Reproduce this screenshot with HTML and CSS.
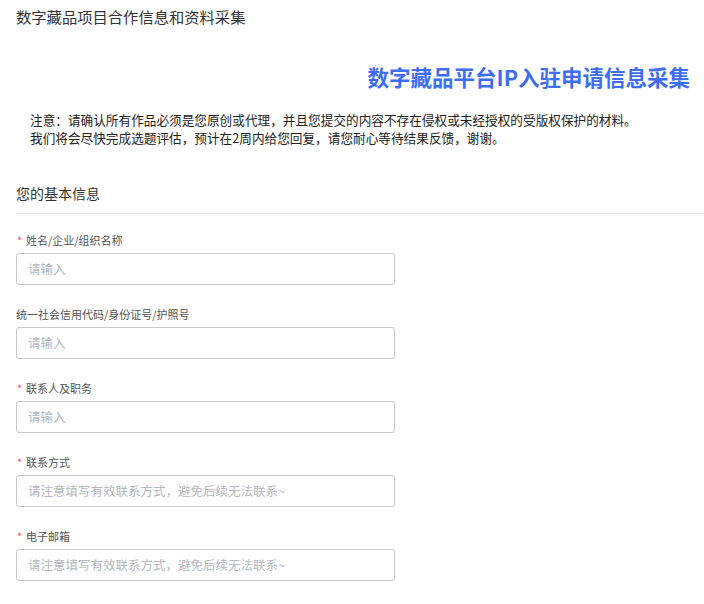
FILE: index.html
```html
<!DOCTYPE html>
<html lang="zh">
<head>
<meta charset="utf-8">
<title>数字藏品项目合作信息和资料采集</title>
<link rel="stylesheet" href="styles.css">
</head>
<body>
<div class="page">
  <div class="top-title">数字藏品项目合作信息和资料采集</div>
  <h1 class="main-title">数字藏品平台IP入驻申请信息采集</h1>
  <div class="notice">
    <p>注意：请确认所有作品必须是您原创或代理，并且您提交的内容不存在侵权或未经授权的受版权保护的材料。</p>
    <p>我们将会尽快完成选题评估，预计在2周内给您回复，请您耐心等待结果反馈，谢谢。</p>
  </div>
  <h2 class="section-title">您的基本信息</h2>
  <form class="form">
    <div class="field">
      <label class="label"><span class="req">*</span>姓名/企业/组织名称</label>
      <input class="input" type="text" placeholder="请输入">
    </div>
    <div class="field">
      <label class="label">统一社会信用代码/身份证号/护照号</label>
      <input class="input" type="text" placeholder="请输入">
    </div>
    <div class="field">
      <label class="label"><span class="req">*</span>联系人及职务</label>
      <input class="input" type="text" placeholder="请输入">
    </div>
    <div class="field">
      <label class="label"><span class="req">*</span>联系方式</label>
      <input class="input" type="text" placeholder="请注意填写有效联系方式，避免后续无法联系~">
    </div>
    <div class="field">
      <label class="label"><span class="req">*</span>电子邮箱</label>
      <input class="input" type="text" placeholder="请注意填写有效联系方式，避免后续无法联系~">
    </div>
  </form>
</div>
</body>
</html>
```
FILE: styles.css
```css
* { box-sizing: border-box; }
html, body {
  margin: 0;
  padding: 0;
  background: #fff;
}
body {
  font-family: "Noto Sans CJK SC", "Noto Sans", "Liberation Sans", sans-serif;
  color: #333;
}
.page {
  padding-left: 16px;
}
.top-title {
  margin-top: 6px;
  font-size: 15.3px;
  line-height: 20px;
  color: #333;
}
.main-title {
  margin: 36px 0 0 0;
  padding-right: 14px;
  text-align: right;
  font-size: 21.5px;
  line-height: 30px;
  font-weight: 700;
  color: #3d6df2;
}
.notice {
  margin-top: 19px;
  padding-left: 14px;
  font-size: 12.65px;
  line-height: 18.4px;
  color: #222;
}
.notice p { margin: 0; }
.section-title {
  margin: 35px 0 0 0;
  padding-bottom: 10px;
  border-bottom: 1px solid #e6e6e6;
  font-size: 14px;
  line-height: 20px;
  font-weight: 400;
  color: #333;
}
.form {
  margin: 0;
  padding-top: 18px;
}
.field {
  display: flex;
  flex-direction: column;
  margin-bottom: 21px;
}
.label {
  display: flex;
  align-items: center;
  font-size: 11px;
  line-height: 16px;
  color: #555;
}
.req {
  color: #f0506e;
  width: 10px;
  font-size: 11px;
  padding-left: 1px;
}
.input {
  margin-top: 5px;
  width: 379px;
  height: 32px;
  padding: 0 11px;
  border: 1px solid #c9c9c9;
  border-radius: 3px;
  font-family: inherit;
  font-size: 12.5px;
  color: #333;
  outline: none;
}
.input::placeholder {
  color: #b4b8c0;
}
```
